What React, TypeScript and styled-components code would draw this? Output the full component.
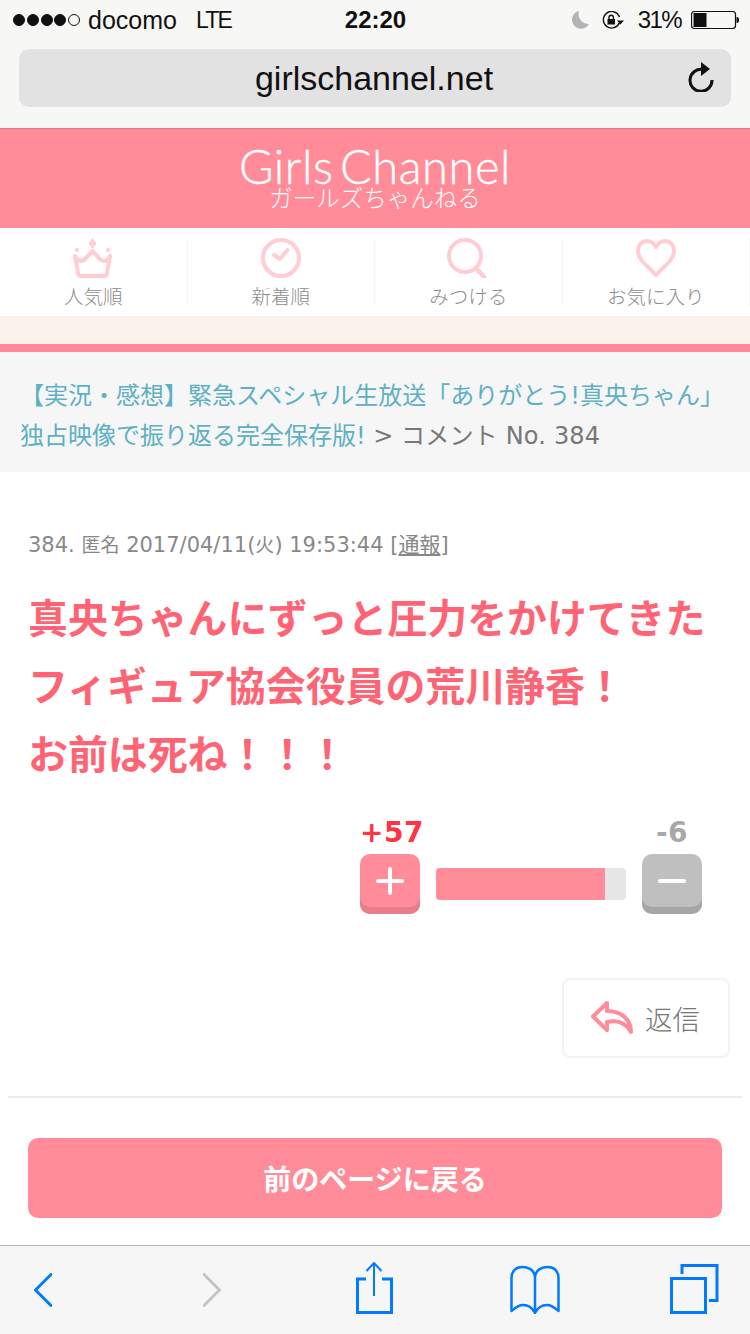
import React from "react";
import styled, { createGlobalStyle } from "styled-components";

const Global = createGlobalStyle`
  html, body { margin: 0; padding: 0; background: #fff; }
  body { font-family: "Liberation Sans", "Noto Sans CJK JP", sans-serif; }
  * { box-sizing: border-box; }
`;
const Page = styled.div`
  width: 750px; height: 1334px; display: flex; flex-direction: column; overflow: hidden; background: #fff;
`;
const Chrome = styled.div`
  height: 129px; background: #f7f7f5; display: flex; flex-direction: column; border-bottom: 1px solid #d9787f;
`;
const StatusBar = styled.div`
  height: 49px; padding: 0 11px 9px 12px; display: grid; grid-template-columns: 1fr auto 1fr; align-items: center;
  font-size: 25px; color: #111;
`;
const StatusLeft = styled.div`display: flex; align-items: center;`;
const Signal = styled.div`display: flex; gap: 1.75px; margin: 0 8px 0 1px;`;
const Dot = styled.span<{ $on: boolean }>`
  width: 12px; height: 12px; border-radius: 50%; border: 1px solid #111; background: ${p => (p.$on ? "#111" : "transparent")};
`;
const Lte = styled.span`margin-left: 19px; font-size: 23px; letter-spacing: -1.8px;`;
const Clock = styled.div`font-weight: 700; font-size: 24px;`;
const StatusRight = styled.div`display: flex; align-items: center; justify-content: flex-end; gap: 13px;`;
const Percent = styled.span`font-size: 24px; letter-spacing: -1.6px;`;
const Battery = styled.svg`margin-left: -3px;`;
const UrlBar = styled.div`
  margin: 0 19px; height: 58px; border-radius: 10px; background: #e2e2e2; position: relative;
  display: flex; align-items: center; justify-content: center; font-size: 34px; color: #111; padding-right: 2px;
`;
const Reload = styled.svg`position: absolute; right: 17px; top: 13px;`;
const Header = styled.div`
  height: 99px; background: #ff8c98; color: #fff; display: flex; flex-direction: column; align-items: center; padding-top: 17px;
`;
const Logo = styled.div`
  font-family: Lato, sans-serif; font-weight: 300; font-size: 47px; line-height: 40px; letter-spacing: 0.6px; word-spacing: -7px; -webkit-text-stroke: 0.4px #fff;
`;
const LogoSub = styled.div`
  font-family: "Noto Sans CJK JP", sans-serif; font-weight: 300; font-size: 23.5px; line-height: 22px;
`;
const Nav = styled.div`height: 88px; display: grid; grid-template-columns: repeat(4, 1fr); padding-top: 10px; background: #fff;`;
const NavItem = styled.div`
  height: 68px; border-right: 1px solid #f6f6f6; display: flex; flex-direction: column; align-items: center;
`;
const NavIcon = styled.svg`display: block; flex: none;`;
const NavLabel = styled.span`
  font-family: "Noto Sans CJK JP", sans-serif; font-weight: 300; font-size: 19.5px; line-height: 26px; color: #8c8c8c; margin-top: 5px; white-space: nowrap;
`;
const Cream = styled.div`height: 28px; background: #f9f1ea;`;
const PinkLine = styled.div`height: 8px; background: #ff8c98;`;
const Crumb = styled.div`
  height: 120px; background: #f6f6f6; padding: 24px 20px 0 20px; font-family: "DejaVu Sans", "Noto Sans CJK JP", sans-serif; font-size: 24px; line-height: 40px; color: #777; white-space: nowrap;
`;
const CrumbLink = styled.span`color: #5eb0c4;`;
const CrumbTail = styled.span`letter-spacing: 0.2px;`;
const Content = styled.div`flex: 1; display: flex; flex-direction: column; padding: 59px 0 0;`;
const Meta = styled.div`
  padding-left: 28px; font-family: "DejaVu Sans", "Noto Sans CJK JP", sans-serif; font-size: 21px; line-height: 29px; height: 29px; color: #888; white-space: nowrap;
`;
const Kanji = styled.span`font-size: 19px;`;
const Report = styled.span`font-size: 21px; text-decoration: underline;`;
const Body = styled.div`
  padding: 22px 0 0 28px; font-family: "Noto Sans CJK JP", sans-serif; font-weight: 700; font-size: 39.9px; line-height: 68px; color: #ff6475; white-space: nowrap;
`;
const Votes = styled.div`
  margin-top: 30px; margin-left: 360px; width: 342px; display: grid; grid-template-columns: 60px 1fr 60px; column-gap: 16px; align-items: center;
`;
const Count = styled.div<{ $color: string }>`
  font-family: "DejaVu Sans", sans-serif; font-weight: 700; font-size: 28px; letter-spacing: 0.5px; line-height: 34px; height: 38px; text-align: center; color: ${p => p.$color}; white-space: nowrap;
`;
const Spacer = styled.div``;
const VoteButton = styled.div<{ $bg: string; $edge: string }>`
  width: 60px; height: 60px; border-radius: 10px; background: ${p => p.$bg}; box-shadow: inset 0 -7px 0 ${p => p.$edge};
  display: flex; align-items: center; justify-content: center; padding-bottom: 6px;
`;
const Bar = styled.div`height: 32px; border-radius: 4px; background: #e6e6e6; overflow: hidden;`;
const BarFill = styled.div`height: 100%; background: #ff8c98;`;
const ReplyRow = styled.div`display: flex; justify-content: flex-end; padding: 64px 20px 0 0;`;
const ReplyButton = styled.div`
  width: 168px; height: 80px; border: 2px solid #f3f3f3; border-radius: 8px; display: flex; align-items: center; padding-left: 26px; gap: 11px;
  font-family: "Noto Sans CJK JP", sans-serif; font-weight: 300; font-size: 27.5px; color: #777;
`;
const Divider = styled.div`height: 2px; margin: 38px 8px 0; background: #ececec;`;
const BackButton = styled.div`
  margin: 40px 28px 0; height: 80px; border-radius: 10px; background: #ff8c98; color: #fff; display: flex; align-items: center; justify-content: center;
  font-family: "Noto Sans CJK JP", sans-serif; font-weight: 700; font-size: 28px;
`;
const Toolbar = styled.div`
  margin-top: auto; height: 89px; border-top: 1px solid #b5b5b5; background: #f7f6f6; display: flex; align-items: flex-start;
`;
const ToolIcon = styled.svg<{ $left: number; $top: number; $muted?: boolean }>`
  flex: none; fill: none; stroke: ${p => (p.$muted ? "#c4c4c4" : "#007aff")}; margin-left: ${p => p.$left}px; margin-top: ${p => p.$top}px;
`;

const Crown = () => (
  <NavIcon width="42" height="40" viewBox="0 0 42 40" fill="none" stroke="#ffcdd3" strokeWidth="4" strokeLinejoin="round">
    <path d="M20.500 0l4 5.500-4 5.500-4-5.500z" fill="#ffcdd3" stroke="none" />
    <circle cx="5" cy="12" r="2" fill="#ffcdd3" stroke="none" />
    <circle cx="36" cy="12" r="2" fill="#ffcdd3" stroke="none" />
    <path d="M3 18C5 24 11 24 14 20L20.500 13 27 20C30 24 36 24 38 18L35 35C35 36.500 34 38 32 38H9C7 38 6 36.500 6 35Z" />
  </NavIcon>
);
const ClockIcon = () => (
  <NavIcon width="40" height="40" viewBox="0 0 40 40" fill="none" stroke="#ffcdd3">
    <circle cx="20" cy="20" r="18" strokeWidth="4" />
    <path d="M13 17l6 4 7.500-9" strokeWidth="4" strokeLinecap="round" strokeLinejoin="round" />
  </NavIcon>
);
const SearchIcon = () => (
  <NavIcon width="42" height="40" viewBox="0 0 42 40" fill="none" stroke="#ffcdd3" strokeWidth="4">
    <circle cx="18" cy="18" r="16" />
    <path d="M29 30l8 9" strokeLinecap="round" strokeWidth="4.500" />
  </NavIcon>
);
const HeartIcon = () => (
  <NavIcon width="42" height="40" viewBox="0 0 42 40" fill="none" stroke="#ffcdd3" strokeWidth="4" strokeLinejoin="round">
    <path d="M21 37C13 28 3 22 3 13 3 7 7 3 12 3c4 0 7 2 9 6 2-4 5-6 9-6 5 0 9 4 9 10 0 9-10 15-18 24z" />
  </NavIcon>
);

const navItems = [
  { label: "人気順", icon: <Crown /> },
  { label: "新着順", icon: <ClockIcon /> },
  { label: "みつける", icon: <SearchIcon /> },
  { label: "お気に入り", icon: <HeartIcon /> },
];

export default function App() {
  return (
    <Page>
      <Global />
      <Chrome>
        <StatusBar>
          <StatusLeft>
            <Signal>{[1, 1, 1, 1, 0].map((v, i) => <Dot key={i} $on={!!v} />)}</Signal>
            docomo<Lte>LTE</Lte>
          </StatusLeft>
          <Clock>22:20</Clock>
          <StatusRight>
            <svg width="18" height="18" viewBox="0 0 18 18"><path d="M8 0a9 9 0 1 0 10 13A10 10 0 0 1 8 0z" fill="#b4b4b4" /></svg>
            <svg width="23" height="18" viewBox="0 0 23 18" fill="none" stroke="#111" strokeWidth="1.400">
              <path d="M17.500 11.500A8.300 8.300 0 1 1 17.500 6" />
              <path d="M15 9.500h7l-3.500 4z" fill="#111" stroke="none" />
              <rect x="5.500" y="8" width="7.500" height="5.500" fill="#111" stroke="none" />
              <path d="M7 8V6.500a2.200 2.200 0 0 1 4.400 0V8" />
            </svg>
            <Percent>31%</Percent>
            <Battery width="48" height="18" viewBox="0 0 48 18" fill="none">
              <rect x="0.500" y="0.500" width="44" height="17" rx="3" stroke="#111" strokeWidth="1.200" />
              <rect x="2.500" y="2" width="13" height="14" fill="#111" />
              <path d="M45.500 6c2 0 2.500 1 2.500 3s-.5 3-2.500 3z" fill="#111" />
            </Battery>
          </StatusRight>
        </StatusBar>
        <UrlBar>
          girlschannel.net
          <Reload width="26" height="30" viewBox="0 0 26 30" fill="none">
            <path d="M15 7.500A11 11 0 1 0 24 18" stroke="#111" strokeWidth="3" />
            <path d="M13 0l9 7-9 7z" fill="#111" />
          </Reload>
        </UrlBar>
      </Chrome>
      <Header>
        <Logo>Girls Channel</Logo>
        <LogoSub>ガールズちゃんねる</LogoSub>
      </Header>
      <Nav>
        {navItems.map(n => (
          <NavItem key={n.label}>
            {n.icon}
            <NavLabel>{n.label}</NavLabel>
          </NavItem>
        ))}
      </Nav>
      <Cream />
      <PinkLine />
      <Crumb>
        <CrumbLink>【実況・感想】緊急スペシャル生放送「ありがとう!真央ちゃん」<br />独占映像で振り返る完全保存版!</CrumbLink> &gt; <CrumbTail>コメント No. 384</CrumbTail>
      </Crumb>
      <Content>
        <Meta>384. <Kanji>匿名</Kanji> 2017/04/11(<Kanji>火</Kanji>) 19:53:44 [<Report>通報</Report>]</Meta>
        <Body>
          真央ちゃんにずっと圧力をかけてきた<br />
          フィギュア協会役員の荒川静香！<br />
          お前は死ね！！！
        </Body>
        <Votes>
          <Count $color="#ff3344">+57</Count>
          <Spacer />
          <Count $color="#a8a8a8">-6</Count>
          <VoteButton $bg="#ff8c98" $edge="#e87c88">
            <svg width="30" height="30" viewBox="0 0 30 30" stroke="#fff" strokeWidth="4" strokeLinecap="round"><path d="M15 3v24M3 15h24" /></svg>
          </VoteButton>
          <Bar><BarFill style={{ width: `${(169 / 190) * 100}%` }} /></Bar>
          <VoteButton $bg="#bfbfbf" $edge="#a6a6a6">
            <svg width="30" height="30" viewBox="0 0 30 30" stroke="#fff" strokeWidth="4" strokeLinecap="round"><path d="M3 15h24" /></svg>
          </VoteButton>
        </Votes>
        <ReplyRow>
          <ReplyButton>
            <svg width="44" height="36" viewBox="0 0 44 36" fill="none" stroke="#ff8c98" strokeWidth="4" strokeLinejoin="round" strokeLinecap="round">
              <path d="M17 3L3 16.500 17 30V22C27 20 36 23 41 32 41 20 32 11 17 11Z" />
            </svg>
            返信
          </ReplyButton>
        </ReplyRow>
        <Divider />
        <BackButton>前のページに戻る</BackButton>
        <Toolbar>
          <ToolIcon $left={34} $top={27} width="18" height="34" viewBox="0 0 18 34" strokeWidth="3" strokeLinecap="round" strokeLinejoin="round">
            <path d="M17 1.500L1.500 17 17 32.500" />
          </ToolIcon>
          <ToolIcon $muted $left={151} $top={27} width="18" height="34" viewBox="0 0 18 34" strokeWidth="3" strokeLinecap="round" strokeLinejoin="round">
            <path d="M1 1.500L16.500 17 1 32.500" />
          </ToolIcon>
          <ToolIcon $left={135} $top={16} width="37" height="52" viewBox="0 0 37 52" strokeWidth="2">
            <path d="M18 1v33M10.500 9L18 1l7.500 8" />
            <path d="M10 17H1.500v33.500h34V17H26" strokeWidth="3" />
          </ToolIcon>
          <ToolIcon $left={117} $top={19} width="50" height="49" viewBox="0 0 50 49" strokeWidth="2.500" strokeLinejoin="round">
            <path d="M25 13C25 4 17 2 12 2 6 2 1.500 6 1.500 13V46C4 44 8 40 13 40 19 40 23 44 25 48 27 44 31 40 37 40 42 40 46 44 48.500 46V13C48.500 6 44 2 38 2 33 2 25 4 25 13V48" />
          </ToolIcon>
          <ToolIcon $left={110} $top={18} width="49" height="50" viewBox="0 0 49 50" strokeWidth="3">
            <path d="M1.500 14.500h34v34h-34z" />
            <path d="M12 10V1.500h35v35h-8" />
          </ToolIcon>
        </Toolbar>
      </Content>
    </Page>
  );
}
